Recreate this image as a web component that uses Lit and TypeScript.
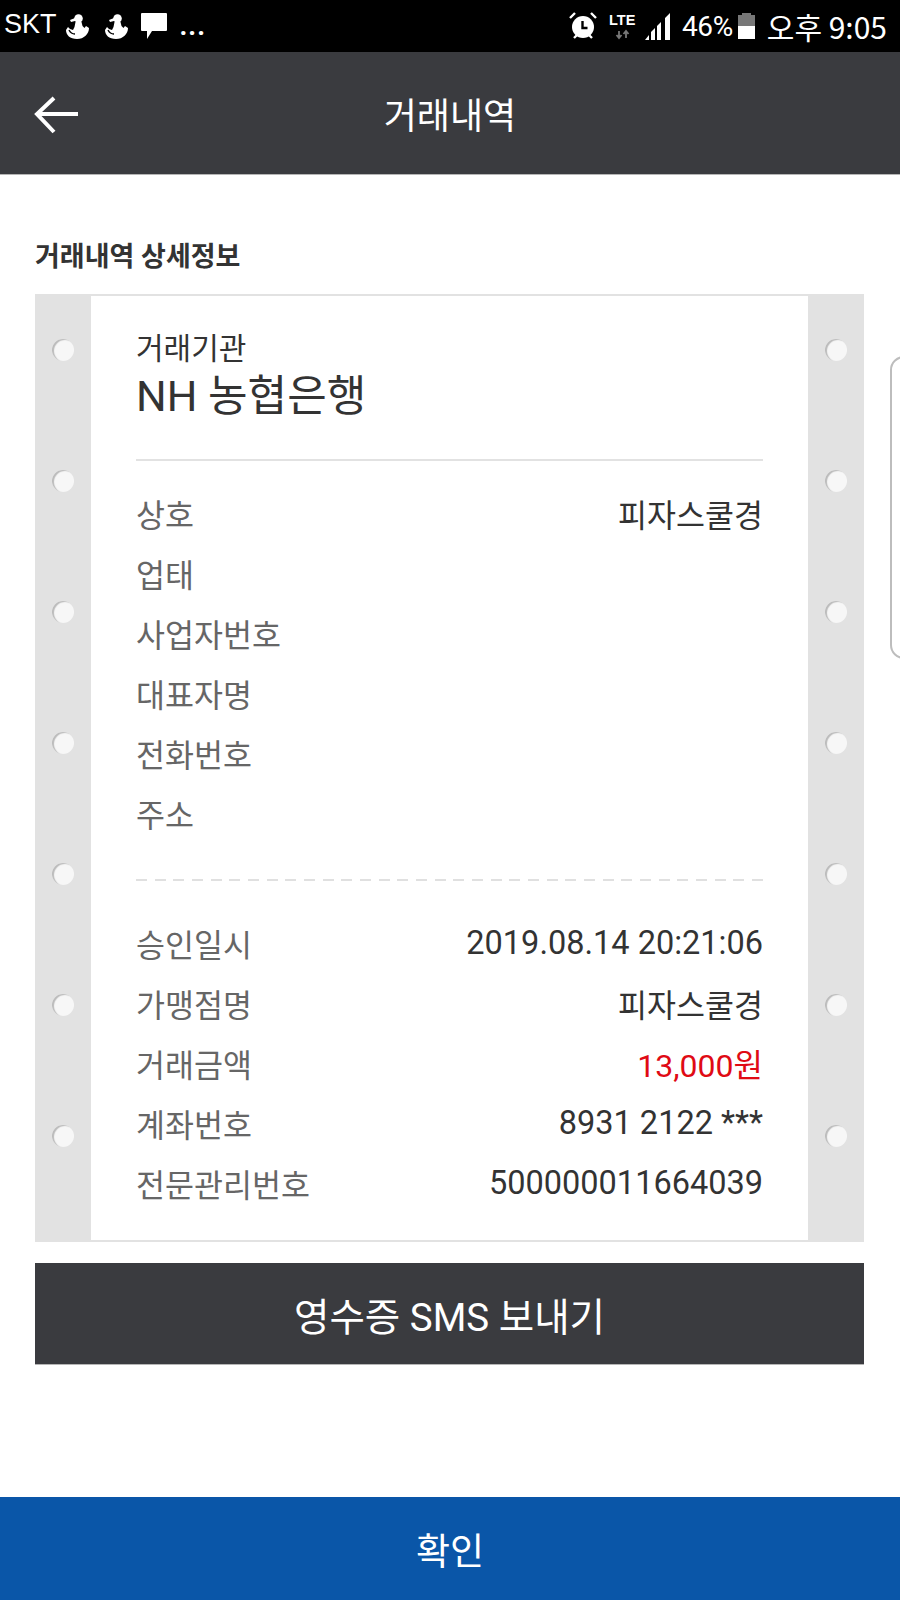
import { LitElement, html, css, svg } from "lit";
import { customElement } from "lit/decorators.js";

const info = [["상호", "피자스쿨경", ""], ["업태", "", ""], ["사업자번호", "", ""], ["대표자명", "", ""], ["전화번호", "", ""], ["주소", "", ""]];
const tx = [
  ["승인일시", "2019.08.14 20:21:06", "num"],
  ["가맹점명", "피자스쿨경", ""],
  ["거래금액", "13,000원", "red"],
  ["계좌번호", "8931 2122 ***", "num"],
  ["전문관리번호", "500000011664039", "num"],
];

const person = svg`<svg class="ic" width="23" height="25" viewBox="0 0 23 25"><circle cx="12.500" cy="4.500" r="4.300" fill="#fff"/><path d="M4 6l5-2v3l-4 1z" fill="#fff"/><path d="M9.500 8h6l1 4 2 2 1.500-2 3 2c0 6-5 11-12 11S0 21 0 16l2-3 2 2 3 1 1.500-3z" fill="#fff"/><path d="M3 16c1 2 3 4 6 4" fill="none" stroke="#000" stroke-width="1.400"/></svg>`;

@customElement("app-root")
export class AppRoot extends LitElement {
  static styles = css`
    :host { display: block; width: 900px; height: 1600px; position: relative; overflow: hidden; background: #fff;
      font-family: Roboto, "Noto Sans CJK KR", sans-serif; color: #333; }
    .status { height: 52px; background: #000; color: #fff; display: flex; align-items: center; justify-content: space-between; padding: 0 13px 0 4px; font-size: 27px; }
    .group { display: flex; align-items: center; }
    .left { gap: 6px; }
    .skt { font-family: "Liberation Sans", sans-serif; font-size: 27px; margin: -4px 3px 0 0; }
    .person2 { margin-left: 10px; }
    .chat { margin-left: 6px; }
    .dots { font-size: 27px; font-weight: 700; margin-left: 6px; line-height: 1; letter-spacing: 1px; }
    .right { gap: 5px; }
    .pct { font-size: 28px; letter-spacing: -0.4px; margin-left: 6px; }
    .lte { margin: 0 2px 0 7px; }
    .clock { font-family: "Noto Sans CJK KR", sans-serif; font-size: 30px; margin-left: 7px; white-space: pre; }
    .ic { display: block; }
    .appbar { height: 123px; box-sizing: border-box; border-bottom: 1px solid #b5b5b5; background: #3a3b3f; display: flex; align-items: center; justify-content: center; position: relative; color: #fff; font-size: 36px; }
    .back { position: absolute; left: 34px; top: 43px; }
    .main { padding: 62px 36px 0 35px; }
    .section { font-size: 27px; font-weight: 700; line-height: 40px; height: 57px; color: #333; }
    .card { display: flex; height: 948px; background: #e2e2e2; }
    .gutter { width: 56px; flex: none; display: flex; flex-direction: column; align-items: center; gap: 109px; padding-top: 45px; box-sizing: border-box; }
    .hole { width: 22px; height: 22px; border-radius: 50%; background: #f7f7f7; box-shadow: inset 2px 1px 1px #bbb; flex: none; }
    .paper { flex: 1; background: #fff; margin: 2px 0 2px; padding: 30px 45px 0; min-width: 0; }
    .inst { font-size: 30px; line-height: 46px; color: #333; }
    .name { font-size: 43px; line-height: 54px; color: #333; height: 90px; margin-top: -3px; }
    .rule { border-top: 2px solid #e2e2e2; }
    .dash { height: 2px; margin-top: 36px; background: repeating-linear-gradient(90deg, #e0e0e0 0 11px, transparent 11px 18.67px); }
    .rows { padding-top: 22px; }
    .rows.second { padding-top: 32px; }
    .row { height: 60px; display: flex; align-items: center; justify-content: space-between; font-size: 31.5px; color: #666; }
    .row b { font-weight: 400; color: #333; }
    .row b.num { font-size: 32.5px; }
    .row b.red { color: #e00a14; font-size: 32px; }
    .sms { height: 102px; margin-top: 21px; background: #3a3b3f; border-bottom: 1px solid #b5b5b5; box-sizing: border-box; color: #fff; display: flex; align-items: center; justify-content: center; font-size: 38.5px; }
    .ok { position: absolute; left: 0; right: 0; bottom: 0; height: 103px; background: #0a56a8; color: #fff; display: flex; align-items: center; justify-content: center; font-size: 37px; }
    .edge { position: absolute; left: 890px; top: 356px; width: 30px; height: 303px; border: 2px solid #bdbdbd; border-radius: 14px; box-sizing: border-box; }
  `;

  private row(r: string[]) {
    return html`<div class="row"><span>${r[0]}</span><b class=${r[2]}>${r[1]}</b></div>`;
  }

  render() {
    const holes = Array.from({ length: 7 }, () => html`<div class="hole"></div>`);
    return html`
      <div class="status">
        <div class="group left">
          <span class="skt">SKT</span>${person}<span class="person2">${person}</span>
          <svg class="ic chat" width="28" height="28" viewBox="0 0 28 28"><path d="M2 1h24a1 1 0 0 1 1 1v16a1 1 0 0 1-1 1H12l-5 8v-8H2a1 1 0 0 1-1-1V2a1 1 0 0 1 1-1z" fill="#fff"/></svg>
          <span class="dots">...</span>
        </div>
        <div class="group right">
          <svg class="ic" width="28" height="28" viewBox="0 0 28 28"><circle cx="14" cy="15" r="11" fill="#fff"/><path d="M13.500 9v7h5" fill="none" stroke="#000" stroke-width="2.400"/><path d="M1 6l5-5M27 6l-5-5M5 26l3-3M23 26l-3-3" stroke="#fff" stroke-width="2.400"/></svg>
          <svg class="ic lte" width="29" height="28" viewBox="0 0 29 28"><text x="0" y="13" font-family="Liberation Sans" font-size="14.500" font-weight="700" fill="#fff">LTE</text><path d="M10 19v7M7.500 23l2.500 3 2.500-3M17 26v-7M14.500 22l2.500-3 2.500 3" fill="none" stroke="#777" stroke-width="1.800"/></svg>
          <svg class="ic" width="26" height="27" viewBox="0 0 26 27"><path d="M0 27l4-5v5zM6 27v-8l4-4v12zM12 27V13l4-4v18zM20 27V5l5-5v27z" fill="#fff"/></svg>
          <span class="pct">46%</span>
          <svg class="ic" width="17" height="26" viewBox="0 0 17 26"><path d="M4 0h9v2h4v11H0V2h4z" fill="#777"/><path d="M0 13h17v13H0z" fill="#fff"/></svg>
          <span class="clock">오후 9:05</span>
        </div>
      </div>
      <div class="appbar">
        <svg class="back" width="46" height="40" viewBox="0 0 46 40"><path d="M44 19H4M20 3 3 19l17 18" fill="none" stroke="#fff" stroke-width="4"/></svg>
        거래내역
      </div>
      <div class="main">
        <div class="section">거래내역 상세정보</div>
        <div class="card">
          <div class="gutter">${holes}</div>
          <div class="paper">
            <div class="inst">거래기관</div>
            <div class="name">NH 농협은행</div>
            <div class="rule"></div>
            <div class="rows">${info.map((r) => this.row(r))}</div>
            <div class="dash"></div>
            <div class="rows second">${tx.map((r) => this.row(r))}</div>
          </div>
          <div class="gutter">${holes}</div>
        </div>
        <div class="sms">영수증 SMS 보내기</div>
      </div>
      <div class="edge"></div>
      <div class="ok">확인</div>
    `;
  }
}
